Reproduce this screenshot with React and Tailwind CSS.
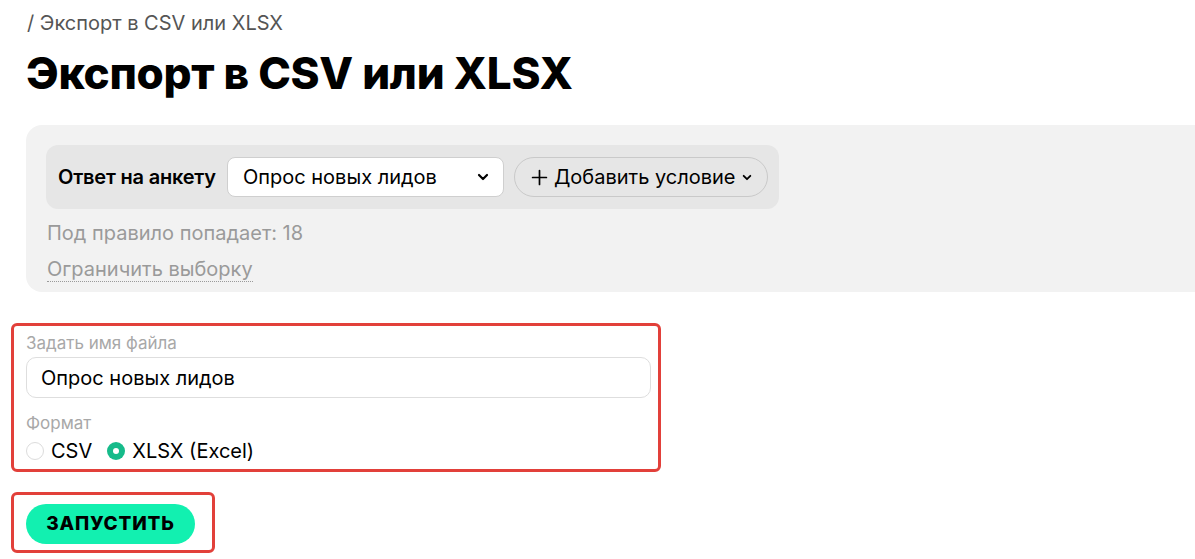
import React, { useState } from "react";

const FONT = { fontFamily: "Inter, 'Noto Sans', 'Liberation Sans', sans-serif" };

function Chevron({ className = "" }) {
  return (
    <svg viewBox="0 0 12 8" className={className} fill="none" stroke="currentColor" strokeWidth="2.2" strokeLinecap="round" strokeLinejoin="round">
      <path d="M2 2l4 4 4-4" />
    </svg>
  );
}

function Radio({ checked, label, onClick }) {
  return (
    <button type="button" onClick={onClick} className="flex items-center gap-[7px] text-[20px] leading-[24px] text-black">
      {checked ? (
        <span className="flex h-[18px] w-[18px] items-center justify-center rounded-full bg-[#16bb8a]">
          <span className="h-[6px] w-[6px] rounded-full bg-white" />
        </span>
      ) : (
        <span className="h-[18px] w-[18px] rounded-full border border-[#dcdcdc] bg-white" />
      )}
      {label}
    </button>
  );
}

export default function App() {
  const [format, setFormat] = useState("xlsx");
  const [name, setName] = useState("Опрос новых лидов");

  return (
    <div className="min-h-screen bg-white pl-[26px] pt-[9px]" style={FONT}>
      <div className="pl-[1px] text-[20px] leading-[28px] text-[#555]">/ Экспорт в CSV или XLSX</div>
      <h1 className="mt-[10px] text-[44px] font-extrabold leading-[52px] tracking-[-0.3px] text-black">
        Экспорт в CSV или XLSX
      </h1>

      <div className="mt-[26px] rounded-l-[16px] bg-[#f2f2f2] pb-[10px] pl-[20px] pt-[20px]">
        <div className="inline-flex items-center rounded-[12px] bg-[#e6e6e6] py-[12px] pl-[12px] pr-[11px]">
          <span className="mr-[11px] text-[20px] font-semibold tracking-[-0.2px] text-black">Ответ на анкету</span>
          <button type="button" className="flex h-[40px] w-[277px] items-center justify-between rounded-[8px] border border-[#cfcfcf] bg-white pl-[15px] pr-[14px] text-[20px] text-black">
            Опрос новых лидов
            <Chevron className="h-[8px] w-[12px]" />
          </button>
          <button type="button" className="ml-[10px] flex h-[40px] w-[254px] items-center gap-[6px] rounded-full border border-[#c9c9c9] pl-[16px] pr-[12px] text-[20px] text-black">
            <svg viewBox="0 0 16 16" className="h-[17px] w-[17px]" fill="none" stroke="currentColor" strokeWidth="1.6" strokeLinecap="round">
              <path d="M8 1.5v13M1.5 8h13" />
            </svg>
            Добавить условие
            <Chevron className="h-[7px] w-[10px]" />
          </button>
        </div>
        <div className="mt-[12px] pl-[1px] text-[20px] leading-[24px] text-[#9a9a9a]">Под правило попадает: 18</div>
        <div className="mt-[12px] pl-[1px] leading-[24px]">
          <span className="border-b border-dotted border-[#9a9a9a] text-[20px] leading-[24px] text-[#9a9a9a]">Ограничить выборку</span>
        </div>
      </div>

      <div className="ml-[-15px] mt-[31px] w-[650px] rounded-[6px] border-[3px] border-[#e2403a] pb-[6px] pl-[12px] pr-[7px] pt-[7px]">
        <div className="text-[17px] leading-[20px] text-[#a8a8a8]">Задать имя файла</div>
        <input
          value={name}
          onChange={(e) => setName(e.target.value)}
          className="mt-[4px] h-[41px] w-full rounded-[10px] border border-[#dedede] px-[14px] text-[20px] text-black outline-none"
        />
        <div className="mt-[15px] text-[17px] leading-[20px] text-[#a8a8a8]">Формат</div>
        <div className="mt-[6px] flex items-center gap-[15px]">
          <Radio checked={format === "csv"} label="CSV" onClick={() => setFormat("csv")} />
          <Radio checked={format === "xlsx"} label="XLSX (Excel)" onClick={() => setFormat("xlsx")} />
        </div>
      </div>

      <div className="ml-[-15px] mt-[20px] w-[204px] rounded-[6px] border-[3px] border-[#e2403a] pb-[6px] pl-[12px] pt-[9px]">
        <button type="button" className="h-[40px] w-[169px] rounded-full bg-[#12f0b0] text-[19px] font-extrabold tracking-[0.8px] text-black">
          ЗАПУСТИТЬ
        </button>
      </div>
    </div>
  );
}
